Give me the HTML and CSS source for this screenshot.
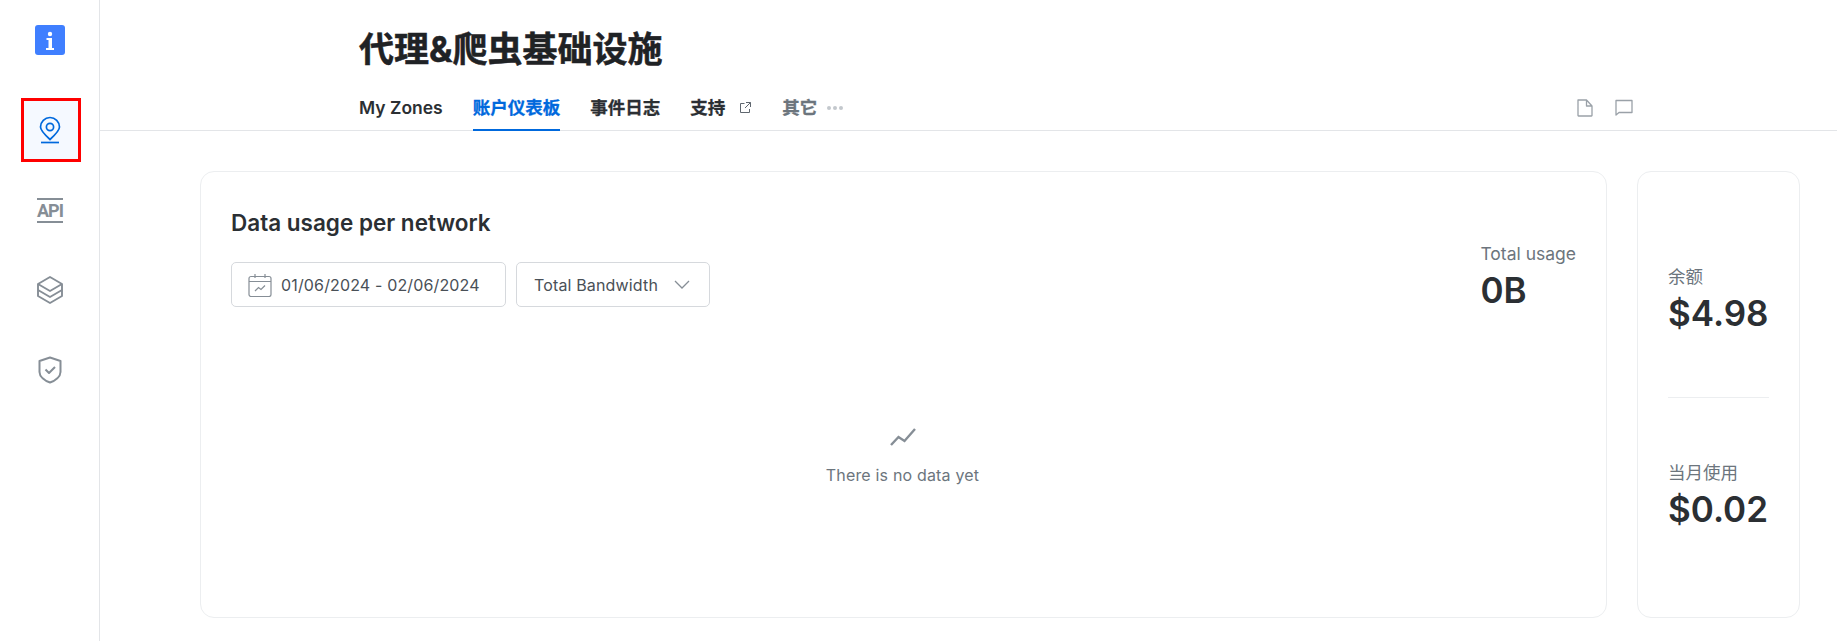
FILE: index.html
```html
<!DOCTYPE html>
<html lang="zh">
<head>
<meta charset="utf-8">
<title>代理&amp;爬虫基础设施</title>
<link rel="stylesheet" href="styles.css">
</head>
<body>
<div class="app">
  <aside class="sidebar">
    <div class="logo"><svg width="30" height="30" viewBox="0 0 30 30"><rect width="30" height="30" rx="3" fill="#3f7fff"/><circle cx="15" cy="9" r="2.2" fill="#fff"/><path d="M11.5 13h5.5v10h2v2h-8v-2h2.5v-8h-2z" fill="#fff"/></svg></div>
    <nav class="side-nav">
      <a class="side-item active"><svg width="24" height="28" viewBox="0 -1 24 28" fill="none" stroke="#0069dd" stroke-width="1.7"><path d="M12 22.5C6 17 2.500 13.500 2.500 10a9.500 9.500 0 0 1 19 0c0 3.500-3.500 7-9.500 12.500z"/><circle cx="12" cy="10" r="3.600"/><path d="M3 25.500h18"/></svg></a>
      <a class="side-item"><span class="api-mark">API</span></a>
      <a class="side-item"><svg width="28" height="30" viewBox="0 0 28 30" fill="none" stroke="#868e96" stroke-width="1.900" stroke-linejoin="round"><path d="M14 2l12 7v12l-12 7-12-7V9z"/><path d="M2 9l12 7 12-7M2 15l12 7 12-7"/></svg></a>
      <a class="side-item"><svg width="24" height="28" viewBox="0 0 24 28" fill="none" stroke="#868e96" stroke-width="2" stroke-linejoin="round"><path d="M12 1.500l10.500 3.500v11c0 4.500-5 8.500-10.500 10.500C6.500 24.500 1.500 20.500 1.500 16V5z"/><path d="M7.500 13.500l3.500 3.500 6-6"/></svg></a>
    </nav>
  </aside>
  <main class="main">
    <header class="header">
      <h1 class="title">代理&amp;爬虫基础设施</h1>
      <div class="tabs">
        <a class="tab">My Zones</a>
        <a class="tab current cjk">账户仪表板</a>
        <a class="tab cjk">事件日志</a>
        <a class="tab cjk">支持<svg class="tab-icon" width="13" height="13" viewBox="0 0 13 13" fill="none" stroke="#5f676f" stroke-width="1"><path d="M5.500 2.500H1.500v9h9V8M7 1.500h4.500V6M11.500 1.500L6 7"/></svg></a>
        <a class="tab muted cjk">其它<svg class="tab-dots" width="16" height="4" viewBox="0 0 16 4" fill="#c3c8cd"><circle cx="2" cy="2" r="2"/><circle cx="8" cy="2" r="2"/><circle cx="14" cy="2" r="2"/></svg></a>
        <div class="tab-actions">
          <svg width="16" height="18" viewBox="0 0 16 18" fill="none" stroke="#9aa1a8" stroke-width="1.300" stroke-linejoin="round"><path d="M1 1h8.500L15 7v9.500a.5.5 0 0 1-.5.500h-13a.5.5 0 0 1-.5-.500zM9.500 1v6H15"/></svg>
          <svg width="18" height="17" viewBox="0 0 18 17" fill="none" stroke="#9aa1a8" stroke-width="1.300" stroke-linejoin="round"><path d="M1 1.500h16v12H4l-3 2.500z"/></svg>
        </div>
      </div>
    </header>
    <div class="content">
      <section class="card usage">
        <div class="usage-head">
          <div>
            <h2 class="card-title">Data usage per network</h2>
            <div class="filters">
              <div class="field date"><svg width="24" height="24" viewBox="0 0 24 24" fill="none" stroke="#868e96" stroke-width="1.200"><rect x="1" y="3.500" width="22" height="20" rx="2"/><path d="M1 8.500h22M7 1v4M17 1v4"/><path d="M7 18l3.500-3.500 2.500 2 4-4"/></svg><span>01/06/2024 - 02/06/2024</span></div>
              <div class="field select"><span>Total Bandwidth</span><svg width="16" height="9" viewBox="0 0 16 9" fill="none" stroke="#868e96" stroke-width="1.300"><path d="M1 1l7 7 7-7"/></svg></div>
            </div>
          </div>
          <div class="stat total"><div class="stat-label">Total usage</div><div class="stat-value">0B</div></div>
        </div>
        <div class="empty">
          <svg width="26" height="18" viewBox="0 0 26 18" fill="none" stroke="#868e96" stroke-width="2.400"><path d="M1 17l7.500-8 6 4L25 1"/></svg>
          <div class="empty-text">There is no data yet</div>
        </div>
      </section>
      <section class="card balance">
        <div class="balance-part first"><div class="stat"><div class="stat-label">余额</div><div class="stat-value">$4.98</div></div></div>
        <div class="balance-part second"><div class="stat"><div class="stat-label">当月使用</div><div class="stat-value">$0.02</div></div></div>
      </section>
    </div>
  </main>
</div>
</body>
</html>
```

FILE: styles.css
```css
* { box-sizing: border-box; }
html, body { margin: 0; height: 100%; }
body {
  font-family: Inter, "Noto Sans CJK SC", sans-serif;
  color: #2b2f33;
  background: #fff;
  overflow: hidden;
}
.app { display: flex; height: 641px; }
.sidebar {
  width: 100px;
  flex: none;
  border-right: 1px solid #e3e5e8;
  display: flex;
  flex-direction: column;
  align-items: center;
  padding-left: 2px;
}
.logo { margin: 25px 1px 0 0; height: 30px; line-height: 0; }
.side-nav { margin-top: 43px; display: flex; flex-direction: column; gap: 16px; }
.side-item {
  width: 60px;
  height: 64px;
  padding-right: 1px;
  display: flex;
  align-items: center;
  justify-content: center;
}
.side-item.active { background: #f5f9ff; outline: 3px solid #f00; outline-offset: -3px; }
.api-mark {
  width: 26px;
  height: 25px;
  border-top: 2px solid #868e96;
  border-bottom: 2px solid #868e96;
  font-family: Roboto, sans-serif;
  font-size: 18px;
  font-weight: 700;
  letter-spacing: -1px;
  line-height: 21px;
  text-align: center;
  white-space: nowrap;
  color: #868e96;
}
.main { flex: 1; min-width: 0; }
.header { height: 131px; padding-left: 259px; border-bottom: 1px solid #e3e5e8; display: flex; flex-direction: column; }
.title { margin: 24px 0 0; font-size: 35px; line-height: 50px; font-weight: 700; color: #1f2225; -webkit-text-stroke: .5px #1f2225; }
.tabs { margin-top: auto; display: flex; align-items: stretch; height: 40px; padding-right: 204px; }
.tab {
  font-size: 17.5px;
  font-weight: 600;
  margin-right: 30px;
  padding-top: 6px;
  display: flex;
  align-items: flex-start;
  line-height: 24px;
  color: #2b2f33;
}
.tab.cjk { -webkit-text-stroke: .3px currentColor; }
.tab.current { color: #0069dd; border-bottom: 2px solid #0069dd; margin-bottom: -1px; }
.tab.muted { color: #6c757d; }
.tab-icon { margin: 5px 0 0 14px; }
.tab-dots { margin: 10px 0 0 10px; }
.tab-actions { margin-left: auto; display: flex; gap: 22px; padding-top: 9px; align-items: flex-start; }
.content { display: flex; gap: 30px; padding: 40px 37px 0 100px; }
.card { border: 1px solid #eceef0; border-radius: 14px; height: 447px; background: #fff; }
.usage { flex: 1; min-width: 0; padding: 37px 30px 0; display: flex; flex-direction: column; }
.usage-head { display: flex; justify-content: space-between; }
.card-title { margin: 0; font-size: 22.5px; line-height: 28px; font-weight: 600; color: #2b2f33; }
.filters { display: flex; gap: 10px; margin-top: 25px; }
.field {
  height: 45px;
  border: 1px solid #d6d9dd;
  border-radius: 5px;
  display: flex;
  align-items: center;
  font-size: 16px;
  letter-spacing: .15px;
  color: #495057;
}
.date { width: 275px; padding-left: 16px; gap: 9px; }
.select { width: 194px; padding-left: 17px; gap: 16px; }
.total { margin-top: 33px; }
.stat-label { font-size: 17.5px; line-height: 24px; color: #6c757d; }
.stat-value { font-size: 35px; line-height: 46px; margin-top: 1px; font-weight: 600; color: #2b2f33; }
.empty { margin-top: 115px; margin-right: 2px; display: flex; flex-direction: column; align-items: center; gap: 18px; }
.empty-text { font-size: 16px; letter-spacing: .18px; line-height: 22px; color: #6c757d; }
.balance { width: 163px; flex: none; padding: 0 30px; display: flex; flex-direction: column; }
.balance-part.first { height: 226px; padding-top: 93px; border-bottom: 1px solid #eceef0; }
.balance-part.second { padding-top: 63px; }
```
